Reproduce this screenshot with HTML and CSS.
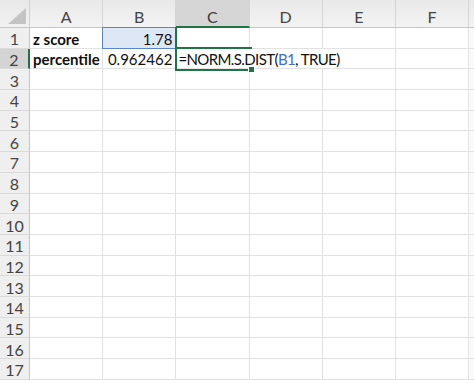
FILE: index.html
```html
<html>
	<head>
		<title>z score percentile</title>
	<link rel="stylesheet" href="styles.css">
	</head>
	<body>
		<div class="sheet" id="sheet">
			<div class="sel"></div>
		</div>
		<script>
			var cols = ["", "A", "B", "C", "D", "E", "F", ""],
				rows = 17,
				sheet = document.getElementById("sheet"),
				data = {
					"A1": '<b>z score</b>',
					"B1": '1.78',
					"A2": '<b>percentile</b>',
					"B2": '0.962462',
					"C2": '<span class="formula">=NORM.S.DIST(<span class="reftxt">B1</span>, TRUE)</span><span class="caret"></span>'
				};

			function cell(cls, html){
				var d = document.createElement("div");
				d.className = cls;
				d.innerHTML = html || "";
				sheet.appendChild(d);
			}

			// column headers
			for (var c = 0; c < cols.length; c++){
				if (c == 0){
					cell("corner", '<span class="tri"></span>');
				} else if (c == 7){
					cell("colhead rest");
				} else {
					cell(cols[c] == "C" ? "colhead on" : "colhead", cols[c]);
				}
			}

			for (var r = 1; r <= rows; r++){
				cell(r == 2 ? "rowhead on" : "rowhead", r);
				for (var c = 1; c <= 6; c++){
					var id = cols[c] + r,
						cls = "cell";
					if (c == 2) cls += " num";
					if (id == "B1") cls += " ref";
					if (id == "C2") cls += " edit";
					if (id == "C2" || id == "D2") cls += " spill";
					cell(cls, data[id]);
				}
				cell("cell rest");
			}
		</script>
	</body>
</html>
```

FILE: styles.css
```css
body {
	margin: 0;
	background-color: #ffffff;
	font-family: "Lato", "Liberation Sans", sans-serif;
	overflow: hidden;
}

.sheet {
	position: relative;
	display: grid;
	grid-template-columns: 30px repeat(6, 73.2px) 1fr;
	grid-template-rows: 28px repeat(17, 20.7px);
	width: 474px;
	height: 383px;
}

.corner {
	position: relative;
	background: linear-gradient(#e9e9e9, #f1f1f1);
	border-right: 1px solid #d0d0d0;
	border-bottom: 1px solid #c6c6c6;
}

.tri {
	position: absolute;
	right: 3px;
	bottom: 3px;
	width: 0;
	height: 0;
	border-left: 18px solid transparent;
	border-bottom: 16px solid #c4c4c4;
}

.colhead {
	display: flex;
	align-items: flex-end;
	justify-content: center;
	padding-bottom: 1px;
	background: linear-gradient(#e9e9e9, #f3f3f3);
	border-right: 1px solid #d4d4d4;
	border-bottom: 1px solid #c6c6c6;
	color: #444444;
	font-size: 16px;
	box-sizing: border-box;
}

.colhead.on {
	background: #d6d6d6;
	border-bottom: 2px solid #217346;
	padding-bottom: 0;
	color: #3a3a3a;
}

.colhead.rest {
	border-right: none;
}

.rowhead {
	display: flex;
	align-items: center;
	justify-content: center;
	padding-top: 2px;
	background-color: #efefef;
	border-right: 1px solid #c6c6c6;
	border-bottom: 1px solid #dadada;
	color: #444444;
	font-size: 16px;
	box-sizing: border-box;
}

.rowhead.on {
	background-color: #d4d4d4;
	border-right: 2px solid #217346;
}

.cell {
	display: flex;
	align-items: flex-end;
	padding: 0 3px 0 3px;
	border-right: 1px solid #e1e1e1;
	border-bottom: 1px solid #e1e1e1;
	font-size: 15px;
	color: #111111;
	white-space: nowrap;
	box-sizing: border-box;
}

.cell.num {
	justify-content: flex-end;
}

.cell.rest {
	border-right: none;
	padding: 0;
	background-color: #fafafa;
}

.cell.ref {
	background-color: #dde7f5;
	border: 1px solid #5b86c8;
	margin: -1px 0 0 -1px;
}

.cell.edit {
	position: relative;
	z-index: 2;
	overflow: visible;
	padding-left: 2px;
}

.cell.spill {
	border-right-color: transparent;
}

.formula {
	letter-spacing: -0.6px;
}

.reftxt {
	color: #3f6fc0;
}

.caret {
	display: inline-block;
	width: 1px;
	height: 18px;
	margin-left: 3px;
	margin-bottom: 1px;
	background-color: #000000;
}

.sel {
	position: absolute;
	left: 175.4px;
	top: 27px;
	width: 74.2px;
	height: 42px;
	border-left: 2px solid #217346;
	border-bottom: 2px solid #217346;
	z-index: 3;
	pointer-events: none;
}

.sel::before {
	content: "";
	position: absolute;
	left: 0;
	right: 0;
	top: 20px;
	height: 2px;
	background-color: #217346;
}

.sel::after {
	content: "";
	position: absolute;
	right: -3px;
	bottom: -4px;
	width: 5px;
	height: 5px;
	background-color: #217346;
	border: 1px solid #ffffff;
}
```
